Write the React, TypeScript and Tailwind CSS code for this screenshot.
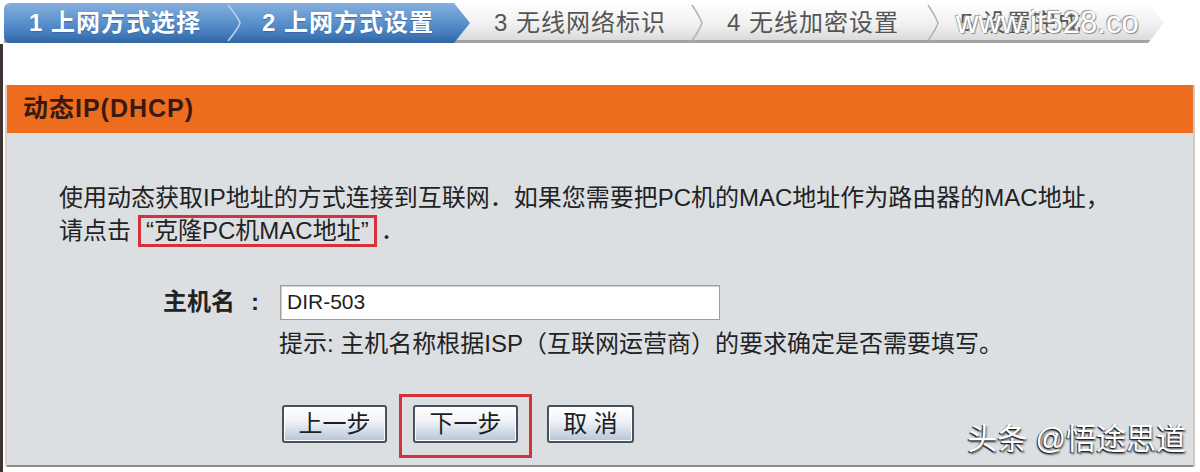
import React from "react";

function Sep({ color, w = 16 }: { color: string; w?: number }) {
  return (
    <svg width={w} height="40" viewBox={`0 0 ${w} 40`} className="shrink-0">
      <path d={`M2 2 Q${w - 4} 14 ${w - 2} 20 Q${w - 4} 26 2 38`} fill="none" stroke={color} strokeWidth="1.6" />
    </svg>
  );
}

function Btn({ children }: { children: React.ReactNode }) {
  return (
    <div className="flex h-[38px] items-center justify-center rounded-[3px] border-[2px] border-[#46525e] bg-[linear-gradient(#ffffff,#f1f4f8_40%,#b6c5d8)] text-[24px] leading-none text-[#1e1e1e] shadow-[inset_0_0_0_1px_#ffffff]">
      {children}
    </div>
  );
}

export default function App() {
  return (
    <div className="relative h-[472px] w-[1200px] overflow-hidden bg-white font-['Liberation_Sans','Noto_Sans_CJK_SC',sans-serif]">
      {/* step bar */}
      <div className="ml-[4px] mt-[3px] flex h-[40px] w-[1160px] bg-[linear-gradient(#fefefe,#f0f0f0_55%,#d6d6d6)] shadow-[inset_0_-3px_0_#a3a3a3] [clip-path:polygon(0_0,1144px_0,1160px_50%,1144px_100%,0_100%)]">
        <div className="flex h-[40px] w-[466px] shrink-0 items-center rounded-l-[6px] bg-[linear-gradient(#86b0de,#5d93cd_45%,#4279bb_80%,#2f649f)] [clip-path:polygon(0_0,450px_0,466px_50%,450px_100%,0_100%)]">
          <div className="w-[222px] shrink-0 pl-[25px] text-[24px] font-bold tracking-[1px] text-white [text-shadow:0_1px_1px_#3a6aa5]">1 上网方式选择</div>
          <Sep color="#b9d0ec" />
          <div className="pl-[20px] text-[24px] font-bold tracking-[1px] text-white [text-shadow:0_1px_1px_#3a6aa5]">2 上网方式设置</div>
        </div>
        <div className="flex h-[40px] items-center">
          <div className="w-[220px] shrink-0 pl-[24px] text-[24px] tracking-[1px] text-[#555555]">3 无线网络标识</div>
          <Sep color="#b4b4b4" w={14} />
          <div className="w-[222px] shrink-0 pl-[23px] text-[24px] tracking-[1px] text-[#555555]">4 无线加密设置</div>
          <Sep color="#b4b4b4" w={14} />
          <div className="pl-[20px] text-[24px] tracking-[1px] text-[#555555]">5 设置完成</div>
        </div>
      </div>
      <div className="absolute left-[956px] top-[4px] text-[31px] leading-[38px] text-white [text-shadow:1px_1px_1px_#8a8a8a,-1px_-1px_1px_#9a9a9a]">
        www.it528.co
      </div>

      {/* panel area */}
      <div className="mt-[1px] flex h-[428px] flex-col border-l-[3px] border-[#3e3432]">
        <div className="h-[41px] shrink-0" />
        <div className="ml-[2px] w-[1190px] border-x-[2px] border-l-[#e7cbc2] border-r-[#cfc8c4]">
          <div className="flex h-[48px] items-center bg-[#ee6c1d] pl-[16px] text-[25px] font-bold tracking-[1px] text-[#3a1a10]">
            动态IP(DHCP)
          </div>
          <div className="h-[334px] border-b-[2px] border-[#8c8782] bg-[#dcdfe2] pl-[52px] pt-[49px] text-[24px] text-[#222222]">
            <div className="h-[32px] whitespace-nowrap leading-[32px]">
              使用动态获取IP地址的方式连接到互联网．如果您需要把PC机的MAC地址作为路由器的MAC地址，
            </div>
            <div className="flex h-[34px] items-center whitespace-nowrap">
              <span>请点击</span>
              <span className="ml-[7px] flex h-[32px] items-center border-[3px] border-[#d6323c] px-[5px]">“克隆PC机MAC地址”</span>
              <span className="ml-[4px]">．</span>
            </div>
            <div className="mt-[36px] flex items-center">
              <span className="ml-[104px] font-bold">主机名</span>
              <span className="ml-[16px] mr-[21px] font-bold">:</span>
              <div className="flex h-[35px] w-[440px] items-center border border-[#9c9c9c] bg-white pl-[6px] text-[21px] text-[#1e1e1e] shadow-[inset_1px_1px_1px_#d0d0d0]">
                DIR-503
              </div>
            </div>
            <div className="ml-[220px] mt-[8px] h-[32px] whitespace-nowrap leading-[32px] text-[#222222]">
              提示: 主机名称根据ISP（互联网运营商）的要求确定是否需要填写。
            </div>
            <div className="ml-[223px] mt-[34px] flex items-start">
              <div className="mt-[11px] w-[105px]">
                <Btn>上一步</Btn>
              </div>
              <div className="ml-[12px] border-[3px] border-[#d6323c] px-[11px] pb-[12px] pt-[8px]">
                <div className="w-[105px]">
                  <Btn>下一步</Btn>
                </div>
              </div>
              <div className="ml-[15px] mt-[11px] w-[87px]">
                <Btn>取 消</Btn>
              </div>
            </div>
          </div>
        </div>
      </div>

      <div className="absolute right-[14px] top-[420px] text-[30px] leading-[38px] text-white [text-shadow:-1px_1px_1px_#1e1e1e,1px_2px_2px_#555555]">
        头条 @悟途思道
      </div>
    </div>
  );
}
